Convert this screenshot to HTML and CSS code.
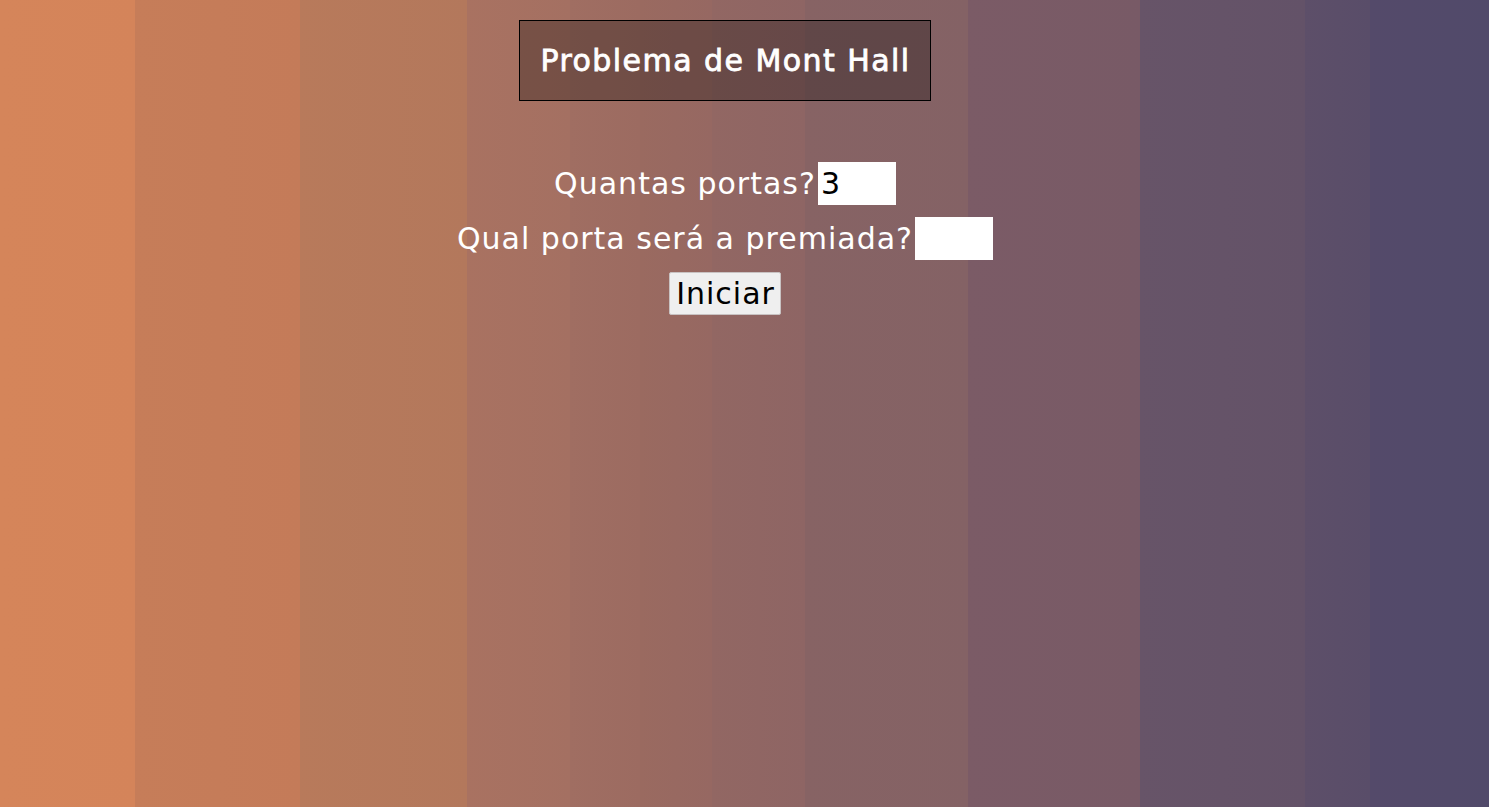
FILE: index.html
```html
<!DOCTYPE html>
<html lang="pt">
<head>
<meta charset="utf-8">
<title>Problema de Mont Hall</title>
<link rel="stylesheet" href="styles.css">
</head>
<body>
<main class="page">
  <h1 class="title">Problema de Mont Hall</h1>
  <form class="form">
    <div class="row"><label class="label" for="portas">Quantas portas?</label><input class="field" id="portas" type="text" value="3"></div>
    <div class="row"><label class="label" for="premiada">Qual porta será a premiada?</label><input class="field" id="premiada" type="text" value=""></div>
    <div class="row"><button class="btn" type="button">Iniciar</button></div>
  </form>
</main>
</body>
</html>
```

FILE: styles.css
```css
html, body {
  margin: 0;
  padding: 0;
  height: 100%;
}
body {
  font-family: "DejaVu Sans", "Noto Sans", sans-serif;
  color: #fff;
  background: linear-gradient(to right,
    #d5855a 0px, #d4845a 135px,
    #c67d59 135px, #c47b59 300px,
    #b87a5b 300px, #b3785c 467px,
    #a97261 467px, #a47062 570px,
    #a06e62 570px, #9c6b61 640px,
    #9a6a60 640px, #966862 712px,
    #926763 712px, #8e6564 805px,
    #876364 805px, #846265 968px,
    #7b5b66 968px, #785a66 1140px,
    #675468 1140px, #635268 1305px,
    #5d4f69 1305px, #594d69 1370px,
    #544a6a 1370px, #514a6a 1489px);
}
.page {
  display: flex;
  flex-direction: column;
  align-items: center;
  padding-top: 20px;
  padding-right: 39px;
}
.title {
  margin: 0;
  height: 79px;
  line-height: 79px;
  padding: 0 19px 0 20px;
  border: 1px solid #000;
  background: rgba(0, 0, 0, 0.28);
  font-size: 30px;
  font-weight: 400;
  letter-spacing: 1.45px;
  -webkit-text-stroke: 0.8px #fff;
}
.form {
  margin-top: 61px;
  display: flex;
  flex-direction: column;
  align-items: center;
  gap: 12px;
}
.row {
  display: flex;
  align-items: center;
  height: 43px;
}
.label {
  font-size: 30px;
  line-height: 43px;
  letter-spacing: 1px;
}
.field {
  width: 78px;
  height: 43px;
  box-sizing: border-box;
  border: 0;
  margin: 0 0 0 2px;
  padding: 0 3px;
  font-family: inherit;
  font-size: 30px;
  color: #000;
  background: #fff;
  outline: none;
}
.btn {
  height: 43px;
  padding: 0 5px 0 6px;
  font-family: inherit;
  font-size: 30px;
  letter-spacing: 1px;
  color: #000;
  background: #efefef;
  border: 1px solid #c8c2c2;
  border-radius: 2px;
}
```
